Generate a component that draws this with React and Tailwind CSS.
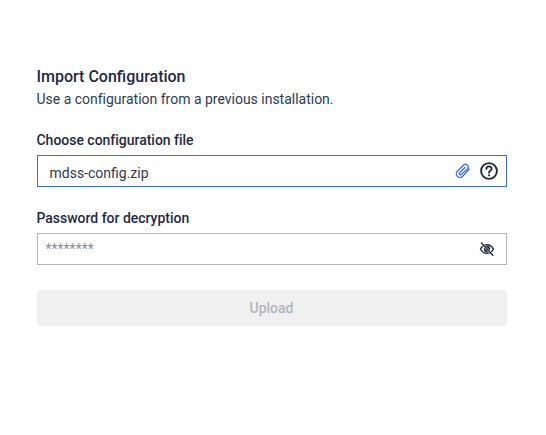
import React from "react";

function Clip() {
  return (
    <svg width="16" height="16" viewBox="0 0 16 16" fill="none" stroke="#3d6be8" strokeWidth="1.300" strokeLinecap="round" strokeLinejoin="round" className="block">
      <path d="M14.200 6 7.600 13.200a3.600 3.600 0 0 1-5.300-4.900L8.600 2a2.700 2.700 0 0 1 4 3.600L6.400 11.400a1.200 1.200 0 0 1-1.800-1.600L9.800 4.500" />
    </svg>
  );
}

function Help() {
  return (
    <svg width="20" height="20" viewBox="0 0 20 20" fill="none" className="block">
      <circle cx="10" cy="10" r="7.900" stroke="#1f2937" strokeWidth="1.900" />
      <path d="M7.400 8a2.600 2.600 0 0 1 5.200 0c0 1.800-2.600 1.900-2.600 3.700" stroke="#1f2937" strokeWidth="1.800" strokeLinecap="round" />
      <circle cx="10" cy="14.300" r="1.100" fill="#1f2937" />
    </svg>
  );
}

function EyeOff() {
  return (
    <svg width="16" height="16" viewBox="0 0 16 16" fill="none" className="block">
      <path d="M1.500 8c1.400-2.800 3.800-4.300 6.500-4.300s5.100 1.500 6.500 4.300c-1.400 2.800-3.800 4.300-6.500 4.300S2.900 10.800 1.500 8Z" stroke="#1f2937" strokeWidth="1.400" />
      <circle cx="8" cy="8" r="3.200" fill="#1f2937" />
      <path d="M2.500 2 13.800 14.200" stroke="#ffffff" strokeWidth="2.400" />
      <path d="M2.500 2 13.800 14.200" stroke="#1f2937" strokeWidth="1.400" strokeLinecap="round" />
    </svg>
  );
}

export default function App() {
  return (
    <div className="w-[546px] h-[435px] bg-white pt-[66px] px-[37px] font-['Roboto',sans-serif] text-[#1f2a44]">
      <div className="w-[470px]">
        <h1 className="text-base leading-[21px] font-medium -ml-[0.5px]">Import Configuration</h1>
        <p className="text-sm leading-[20px] mt-[2px] text-[#2f3a52] -ml-[0.5px] tracking-[-0.01px]">Use a configuration from a previous installation.</p>

        <label className="block text-sm leading-[20px] font-medium mt-[21px] -ml-[0.5px] tracking-[-0.02px]">Choose configuration file</label>
        <div className="flex items-center h-[32px] mt-[5px] pl-[11.500px] pr-[7px] border border-[#3d6be8]">
          <span className="flex-1 text-sm text-[#2f3a52] pt-[3px]">mdss-config.zip</span>
          <div className="flex items-center gap-[8px]">
            <Clip />
            <Help />
          </div>
        </div>

        <label className="block text-sm leading-[20px] font-medium mt-[21px] -ml-[0.5px] tracking-[-0.02px]">Password for decryption</label>
        <div className="flex items-center h-[32px] mt-[5px] pl-[7.500px] pr-[11px] border border-[#b8b8b8]">
          <span className="flex-1 text-sm text-[#8a8f99] pb-[1px]">********</span>
          <EyeOff />
        </div>

        <button className="block w-full h-[36px] mt-[25px] rounded bg-[#f0f0f0] text-sm font-medium text-[#b4b6ba] pb-[1px] -indent-[1px]">Upload</button>
      </div>
    </div>
  );
}
